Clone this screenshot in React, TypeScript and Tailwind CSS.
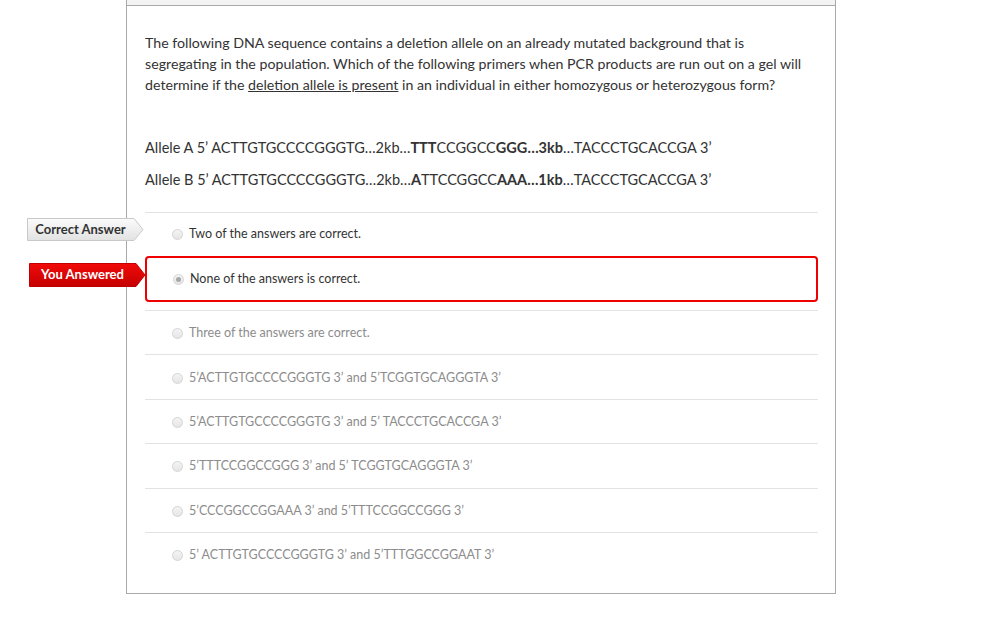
import React from "react";

type Ans = { text: string; state: "correct" | "selected" | "muted" };

const answers: Ans[] = [
  { text: "Two of the answers are correct.", state: "correct" },
  { text: "None of the answers is correct.", state: "selected" },
  { text: "Three of the answers are correct.", state: "muted" },
  { text: "5’ACTTGTGCCCCGGGTG 3’ and 5’TCGGTGCAGGGTA 3’", state: "muted" },
  { text: "5’ACTTGTGCCCCGGGTG 3’ and 5’ TACCCTGCACCGA 3’", state: "muted" },
  { text: "5’TTTCCGGCCGGG 3’ and 5’ TCGGTGCAGGGTA 3’", state: "muted" },
  { text: "5’CCCGGCCGGAAA 3’ and 5’TTTCCGGCCGGG 3’", state: "muted" },
  { text: "5’ ACTTGTGCCCCGGGTG 3’ and 5’TTTGGCCGGAAT 3’", state: "muted" },
];

function Radio({ checked }: { checked?: boolean }) {
  return (
    <span className="w-[11px] h-[11px] rounded-full border border-[#d4d4d4] bg-gradient-to-b from-[#f4f4f4] to-[#e6e6e6] flex items-center justify-center shrink-0">
      {checked && <span className="w-[5px] h-[5px] rounded-full bg-[#a8a8a8]" />}
    </span>
  );
}

function Flag({ kind }: { kind: "correct" | "you" }) {
  const isYou = kind === "you";
  const w = 117;
  const h = isYou ? 24 : 23;
  const body = 107;
  const pts = `0.5,0.5 ${body},0.5 ${w - 1},${h / 2} ${body},${h - 0.5} 0.5,${h - 0.5}`;
  return (
    <div className={isYou ? "relative w-[117px] h-[24px]" : "relative w-[117px] h-[23px]"}>
      <svg width={w} height={h} className="absolute inset-0">
        <defs>
          <linearGradient id={`g-${kind}`} x1="0" y1="0" x2="0" y2="1">
            {isYou ? (
              <>
                <stop offset="0" stopColor="#f20a0a" />
                <stop offset="1" stopColor="#c40000" />
              </>
            ) : (
              <>
                <stop offset="0" stopColor="#fbfbfb" />
                <stop offset="1" stopColor="#e2e2e2" />
              </>
            )}
          </linearGradient>
        </defs>
        <polygon
          points={pts}
          fill={`url(#g-${kind})`}
          stroke={isYou ? "#c00000" : "#c9c9c9"}
          strokeWidth="1"
          strokeLinejoin="round"
        />
      </svg>
      <span
        className={
          isYou
            ? "absolute left-0 top-0 w-[107px] h-full flex items-center justify-center text-[13px] font-bold text-white"
            : "absolute left-0 top-0 w-[107px] h-full flex items-center justify-center text-[13px] font-bold text-[#333]"
        }
      >
        {isYou ? "You Answered" : "Correct Answer"}
      </span>
    </div>
  );
}

export default function App() {
  return (
    <div className="min-h-[619px] w-[1002px] bg-white font-['Lato','Liberation_Sans',sans-serif] antialiased">
      <div className="ml-[126px] w-[710px] border-x border-b border-[#a9a9a9]">
        <div className="h-[6px] bg-[#f3f3f3] border-b border-[#a9a9a9]" />
        <div className="pl-[18px] pr-[17px] pt-[26px] pb-[17px]">
          <p className="text-[14.2px] leading-[21px] text-[#333]">
            The following DNA sequence contains a deletion allele on an already mutated background that is
            segregating in the population. Which of the following primers when PCR products are run out on a gel will
            determine if the <span className="underline">deletion allele is present</span> in an individual in either
            homozygous or heterozygous form?
          </p>
          <div className="mt-[43px] text-[14.5px] leading-[20px] text-[#333]">
            <p>
              Allele A 5’ ACTTGTGCCCCGGGTG…2kb…<b>TTT</b>CCGGCC<b>GGG…3kb</b>…TACCCTGCACCGA 3’
            </p>
            <p className="mt-[12px]">
              Allele B 5’ ACTTGTGCCCCGGGTG…2kb…<b>A</b>TTCCGGCC<b>AAA…1kb</b>…TACCCTGCACCGA 3’
            </p>
          </div>
          <div className="mt-[22px]">
            {answers.map((a, i) => {
              if (a.state === "selected") {
                return (
                  <div key={i} className="relative mb-[8px]">
                    <div className="absolute left-[-116px] top-[7px]">
                      <Flag kind="you" />
                    </div>
                    <div className="h-[46px] border-2 border-[#ee0000] rounded-[4px] flex items-center gap-[6px] pl-[26px] text-[12.5px] text-[#333]">
                      <Radio checked />
                      <span>{a.text}</span>
                    </div>
                  </div>
                );
              }
              if (a.state === "correct") {
                return (
                  <div
                    key={i}
                    className="relative h-[44px] border-t border-[#e3e3e3] flex items-center gap-[6px] pl-[27px] text-[12.5px] text-[#333]"
                  >
                    <div className="absolute left-[-118px] top-[5px]">
                      <Flag kind="correct" />
                    </div>
                    <Radio />
                    <span>{a.text}</span>
                  </div>
                );
              }
              return (
                <div
                  key={i}
                  className="relative h-[44.4px] border-t border-[#e3e3e3] flex items-center gap-[6px] pl-[27px] pt-[2px] text-[12.5px] text-[#8c8c8c]"
                >
                  <Radio />
                  <span>{a.text}</span>
                </div>
              );
            })}
          </div>
        </div>
      </div>
    </div>
  );
}
